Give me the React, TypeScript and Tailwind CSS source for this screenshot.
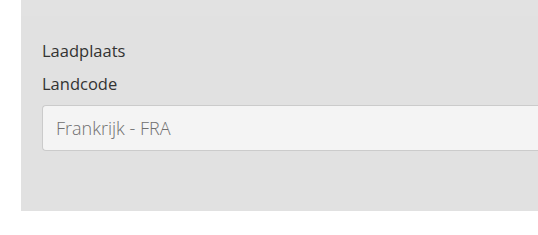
export default function App() {
  return (
    <div className="w-[538px] h-[235px] bg-white pl-[21px] font-['Open_Sans',sans-serif]">
      <div className="h-[211px] bg-[#e1e1e1] border-t-[16px] border-[#e2e2e2] pt-[23px] pl-[21px]">
        <div className="text-[16.5px] leading-[24px] text-[#333332]">Laadplaats</div>
        <div className="mt-[9px] text-[16.5px] leading-[24px] text-[#333332]">Landcode</div>
        <div className="mt-[9px] h-[46px] flex items-center pl-[13px] bg-[#f4f4f4] border border-[#cbcbcb] rounded-l-[4px] border-r-0 text-[18px] font-light text-[#6f6f6f]">
          Frankrijk - FRA
        </div>
      </div>
    </div>
  );
}
